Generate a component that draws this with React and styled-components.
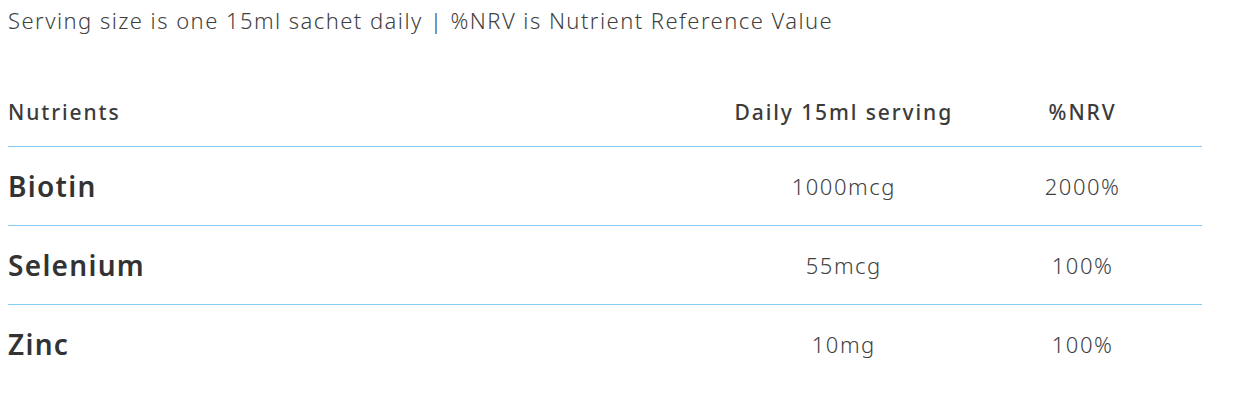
import React from 'react';
import styled, { createGlobalStyle } from 'styled-components';

const GlobalStyle = createGlobalStyle`
    body {
        margin: 8px;
        background: #fff;
        font-family: "Noto Sans", "Open Sans", sans-serif;
        color: #3b3b3b;
    }
`;

const nutrients = [
    { name: 'Biotin', amount: '1000mcg', nrv: '2000%' },
    { name: 'Selenium', amount: '55mcg', nrv: '100%' },
    { name: 'Zinc', amount: '10mg', nrv: '100%' },
];

const App = () => {
    return (
        <>
            <GlobalStyle />
            <Wrap>
                <Caption>Serving size is one 15ml sachet daily | %NRV is Nutrient Reference Value</Caption>
                <Table>
                    <HeadRow>
                        <HeadCell>Nutrients</HeadCell>
                        <HeadCell center>Daily 15ml serving</HeadCell>
                        <HeadCell center>%NRV</HeadCell>
                    </HeadRow>
                    {nutrients.map((n, idx) => (
                        <Row key={idx} last={idx === nutrients.length - 1}>
                            <Name>{n.name}</Name>
                            <Value>{n.amount}</Value>
                            <Value>{n.nrv}</Value>
                        </Row>
                    ))}
                </Table>
            </Wrap>
        </>
    );
};

const Wrap = styled.div`
    width: 1194px;
`;

const Caption = styled.p`
    margin: 0;
    font-size: 22px;
    line-height: 24px;
    font-weight: 300;
    letter-spacing: 1.45px;
    color: #3f3f3f;
`;

const Table = styled.div`
    margin-top: 48px;
    display: flex;
    flex-direction: column;
`;

const HeadRow = styled.div`
    display: grid;
    grid-template-columns: 60% 20% 20%;
    border-bottom: 1px solid #86ccf2;
`;

const HeadCell = styled.div`
    padding: 20px 0 22px;
    line-height: 24px;
    font-size: 21px;
    font-weight: 500;
    letter-spacing: 1.9px;
    color: #3b3b3b;
    text-align: ${(p) => (p.center ? 'center' : 'left')};
`;

const Row = styled.div`
    display: grid;
    grid-template-columns: 60% 20% 20%;
    align-items: center;
    height: 78px;
    border-bottom: ${(p) => (p.last ? 'none' : '1px solid #86ccf2')};
`;

const Name = styled.div`
    font-size: 28px;
    font-weight: 600;
    letter-spacing: 1.3px;
    color: #333;
`;

const Value = styled.div`
    text-align: center;
    font-size: 22px;
    font-weight: 300;
    letter-spacing: 1.5px;
    color: #3f3f3f;
`;

export default App;
